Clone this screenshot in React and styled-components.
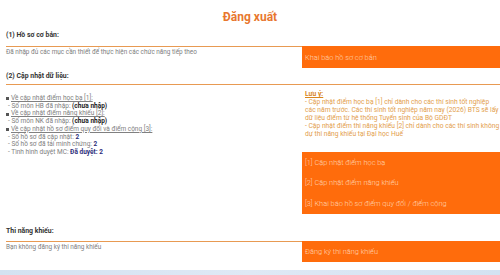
import React from "react";
import styled, { createGlobalStyle } from "styled-components";

const Global = createGlobalStyle`
  html, body { margin: 0; padding: 0; background: #fff; }
  body { font-family: Roboto, "Noto Sans", Arial, sans-serif; }
`;

const Page = styled.div`
  width: 500px;
  height: 275px;
  overflow: hidden;
  display: flex;
  flex-direction: column;
  position: relative;
`;

const Title = styled.div`
  height: 27px;
  display: flex;
  align-items: center;
  justify-content: center;
  padding-top: 3px;
  font-size: 12px;
  font-weight: 700;
  color: #e8772e;
`;

const Heading = styled.div`
  padding-left: 6px;
  font-size: 6.9px;
  line-height: 10px;
  font-weight: 700;
  color: #333;
  margin-top: ${(p) => p.$mt || 0}px;
  margin-bottom: ${(p) => p.$mb || 0}px;
`;

const Row = styled.div`
  display: grid;
  grid-template-columns: 296px 240px;
  margin-left: 6px;
  border-top: 1px solid ${(p) => (p.$full ? "#e89a52" : "transparent")};
`;

const LeftCell = styled.div`
  border-top: ${(p) => (p.$line ? "1px solid #e89a52" : "none")};
  padding: ${(p) => p.$pad || "1px 0 0 0"};
  font-size: 6.4px;
  line-height: 8px;
  color: #808080;
`;

const RightCell = styled.div`
  display: flex;
  flex-direction: column;
`;

const OrangeBox = styled.div`
  background: #ff6c0c;
  color: #ffd4b2;
  font-size: 7.4px;
  font-weight: 300;
  display: flex;
  flex-direction: column;
  padding-left: 3px;
`;

const BoxItem = styled.div`
  height: ${(p) => p.$h || 21}px;
  display: flex;
  align-items: center;
  white-space: nowrap;
`;

const List = styled.div`
  font-size: 6.5px;
  line-height: 7.7px;
  color: #808080;
  white-space: nowrap;
`;

const LinkLine = styled.div`
  display: flex;
  align-items: center;
  gap: 2px;
  & > span {
    text-decoration: underline;
  }
`;

const Bullet = styled.i`
  display: inline-block;
  width: 3px;
  height: 3px;
  background: #555;
`;

const Sub = styled.div`
  padding-left: 2px;
`;

const Strong = styled.b`
  color: ${(p) => (p.$navy ? "#2b2d7a" : "#222")};
  font-weight: 700;
`;

const Notes = styled.div`
  padding: 5px 0 0 3px;
  height: 67px;
  box-sizing: border-box;
  font-size: 6.7px;
  line-height: 8px;
  color: #e3a04e;
  white-space: nowrap;
`;

const NoteTitle = styled.div`
  color: #d9861c;
  font-weight: 700;
  text-decoration: underline;
`;

const Spacer = styled.div`
  flex: 1;
`;

const BottomBar = styled.div`
  height: 5px;
  background: linear-gradient(90deg, #d3e2f1, #dfe9f5 50%, #d3e2f1);
`;

export default function App() {
  return (
    <Page>
      <Global />
      <Title>Đăng xuất</Title>

      <Heading $mb={5}>(1) Hồ sơ cơ bản:</Heading>
      <Row>
        <LeftCell $line>Đã nhập đủ các mục cần thiết để thực hiện các chức năng tiếp theo</LeftCell>
        <RightCell>
          <OrangeBox>
            <BoxItem $h={22}>Khai báo hồ sơ cơ bản</BoxItem>
          </OrangeBox>
        </RightCell>
      </Row>

      <Heading $mt={3} $mb={3}>(2) Cập nhật dữ liệu:</Heading>
      <Row $full>
        <LeftCell $pad="10px 0 0 0">
          <List>
            <LinkLine><Bullet /><span>Về cập nhật điểm học bạ [1]:</span></LinkLine>
            <Sub>- Số môn HB đã nhập: <Strong>(chưa nhập)</Strong></Sub>
            <LinkLine><Bullet /><span>Về cập nhật điểm năng khiếu [2]:</span></LinkLine>
            <Sub>- Số môn NK đã nhập: <Strong>(chưa nhập)</Strong></Sub>
            <LinkLine><Bullet /><span>Về cập nhật hồ sơ điểm quy đổi và điểm cộng [3]:</span></LinkLine>
            <Sub>- Số hồ sơ đã cập nhật: <Strong $navy>2</Strong></Sub>
            <Sub>- Số hồ sơ đã tải minh chứng: <Strong $navy>2</Strong></Sub>
            <Sub>- Tình hình duyệt MC: <Strong $navy>Đã duyệt: 2</Strong></Sub>
          </List>
        </LeftCell>
        <RightCell>
          <Notes>
            <NoteTitle>Lưu ý:</NoteTitle>
            <div>- Cập nhật điểm học bạ [1] chỉ dành cho các thí sinh tốt nghiệp</div>
            <div>các năm trước. Các thí sinh tốt nghiệp năm nay (2026) BTS sẽ lấy</div>
            <div>dữ liệu điểm từ hệ thống Tuyển sinh của Bộ GDĐT</div>
            <div>- Cập nhật điểm thi năng khiếu [2] chỉ dành cho các thí sinh không</div>
            <div>dự thi năng khiếu tại Đại học Huế</div>
          </Notes>
          <OrangeBox>
            <BoxItem $h={20}>[1] Cập nhật điểm học bạ</BoxItem>
            <BoxItem $h={21}>[2] Cập nhật điểm năng khiếu</BoxItem>
            <BoxItem $h={21}>[3] Khai báo hồ sơ điểm quy đổi / điểm cộng</BoxItem>
          </OrangeBox>
        </RightCell>
      </Row>

      <Heading $mt={12} $mb={4}>Thi năng khiếu:</Heading>
      <Row>
        <LeftCell $line>Bạn không đăng ký thi năng khiếu</LeftCell>
        <RightCell>
          <OrangeBox>
            <BoxItem $h={21}>Đăng ký thi năng khiếu</BoxItem>
          </OrangeBox>
        </RightCell>
      </Row>
      <Spacer />
      <BottomBar />
    </Page>
  );
}
